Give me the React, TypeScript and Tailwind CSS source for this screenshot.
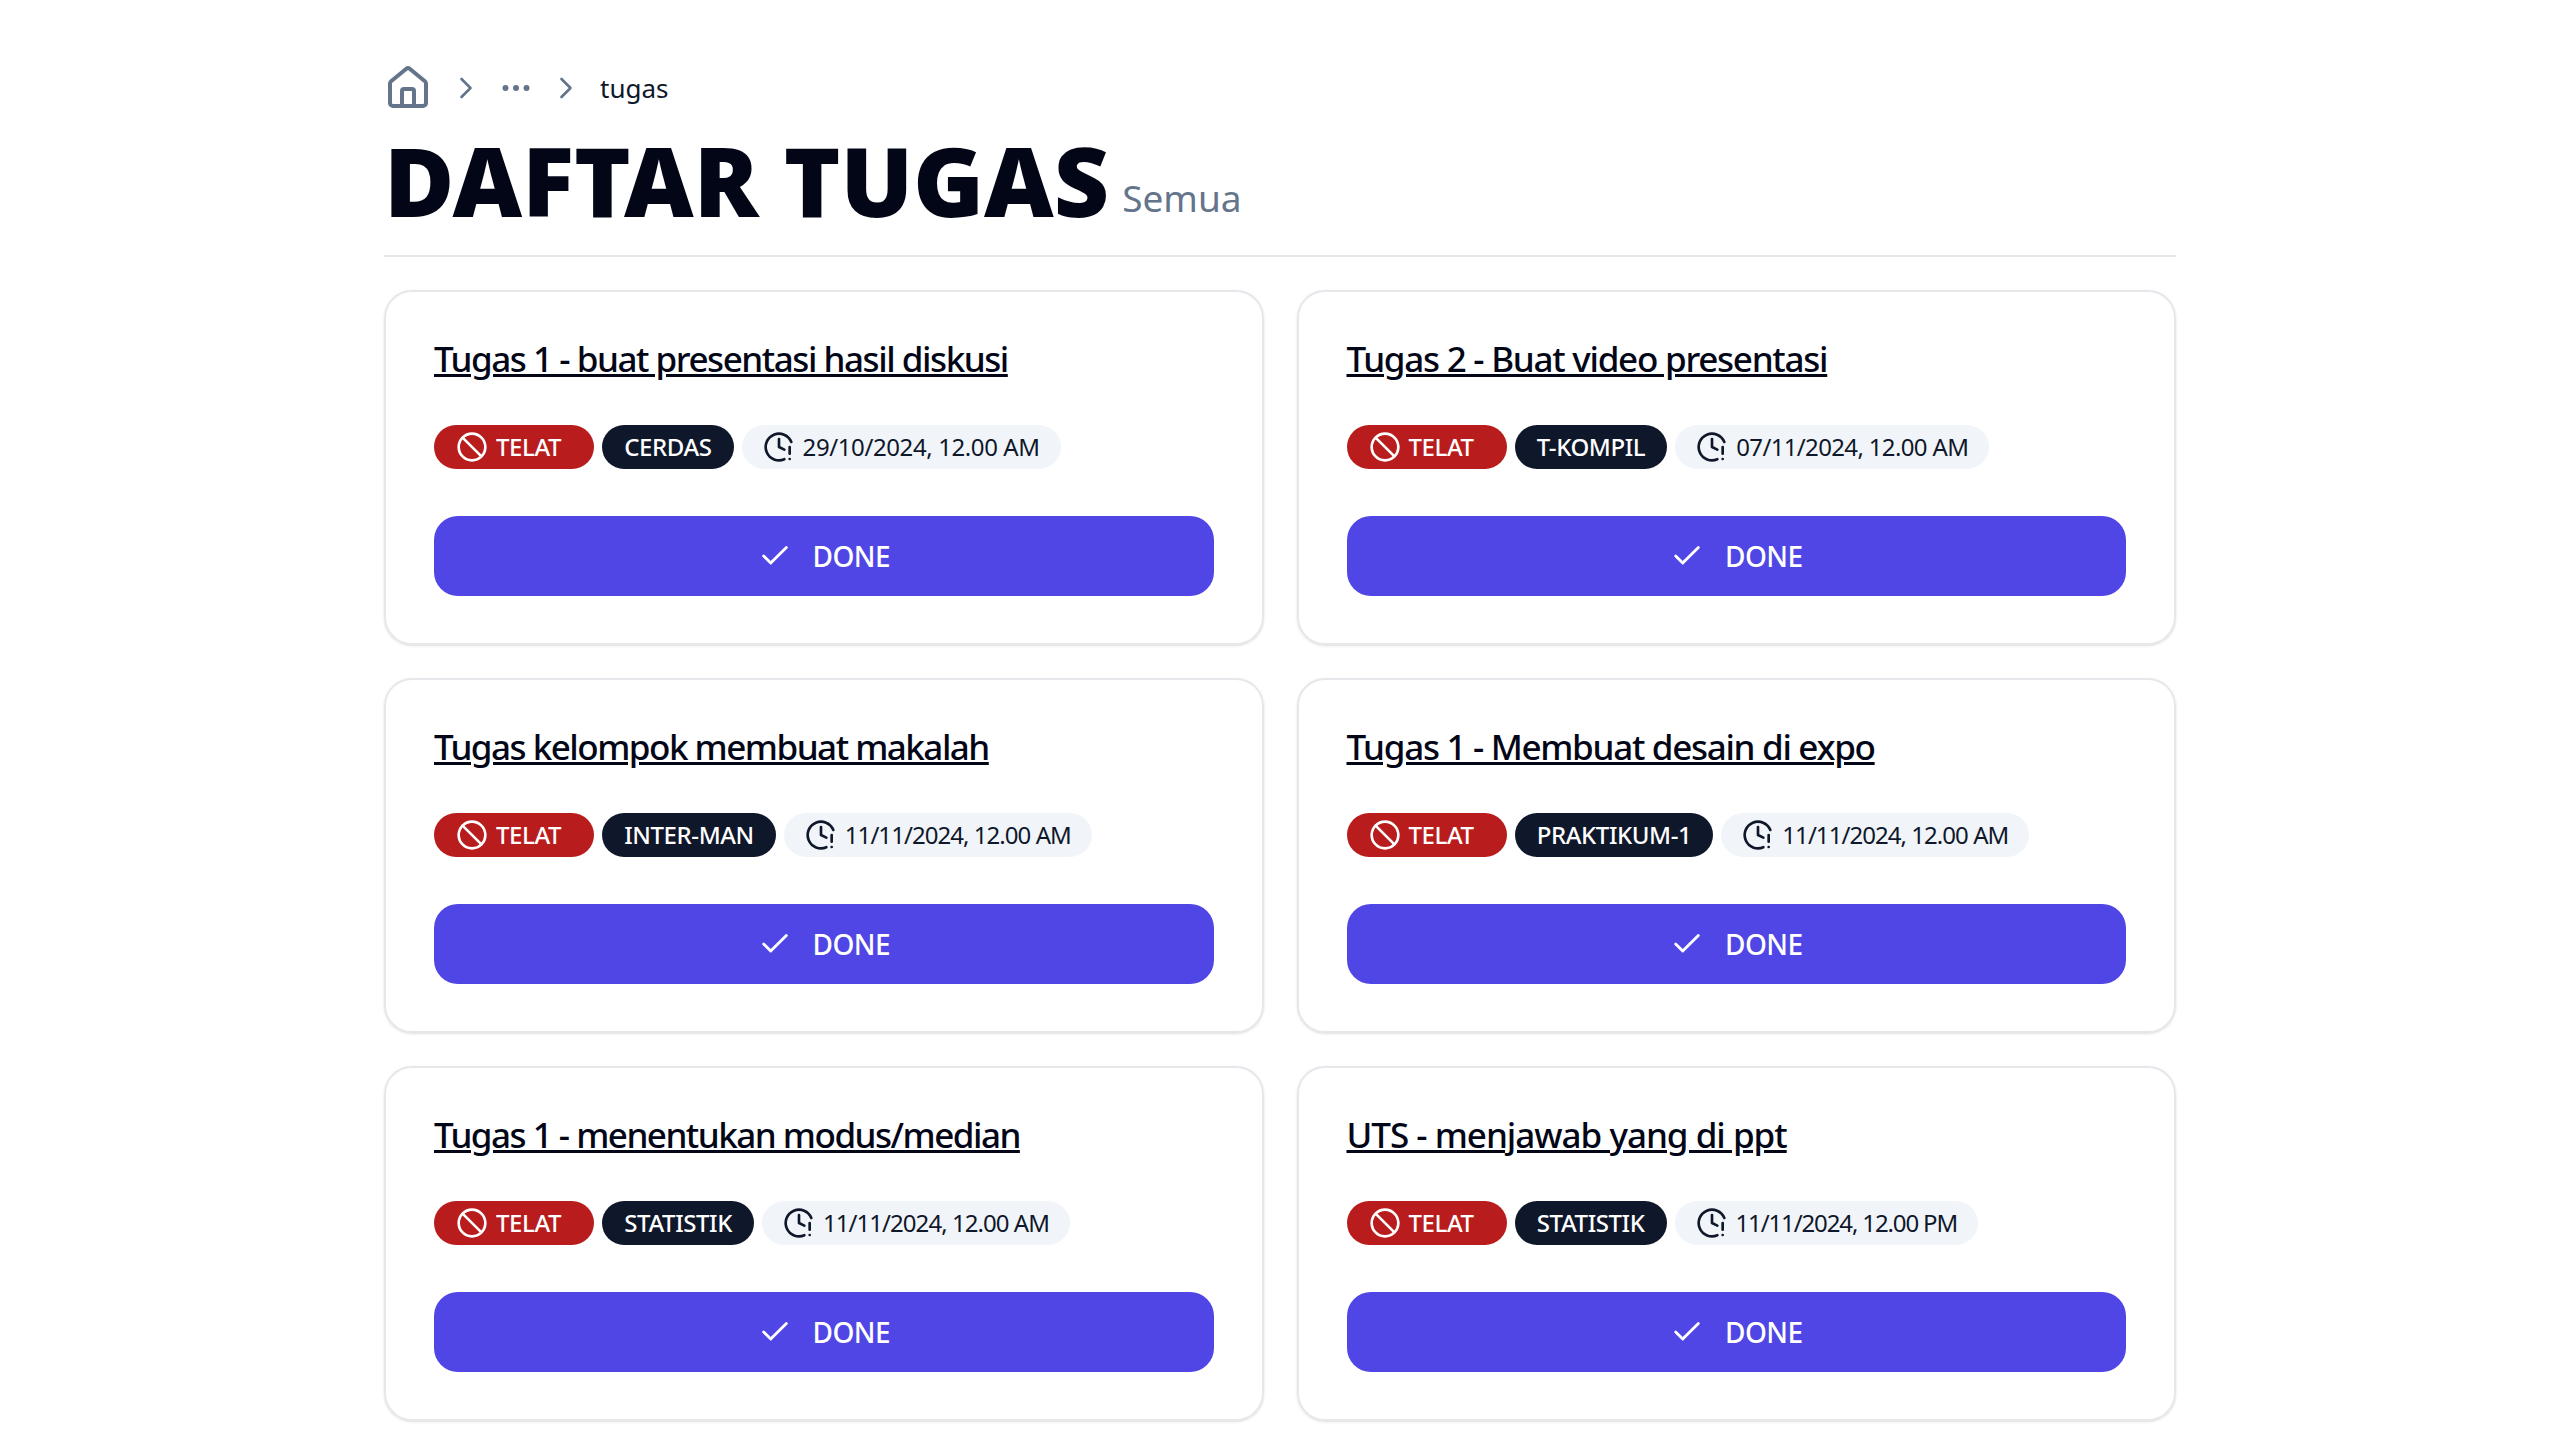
import { Ban, Check, ClockAlert, ChevronRight, Ellipsis } from "lucide-react";

const tasks = [
  { title: "Tugas 1 - buat presentasi hasil diskusi", titleSpacing: "tracking-[-1.45px]", course: "CERDAS", date: "29/10/2024, 12.00 AM", dateSpacing: "tracking-[-0.4px]" },
  { title: "Tugas 2 - Buat video presentasi", titleSpacing: "tracking-[-1.25px]", course: "T-KOMPIL", date: "07/11/2024, 12.00 AM", dateSpacing: "tracking-[-0.65px]" },
  { title: "Tugas kelompok membuat makalah", titleSpacing: "tracking-[-1.5px]", course: "INTER-MAN", date: "11/11/2024, 12.00 AM", dateSpacing: "tracking-[-0.95px]" },
  { title: "Tugas 1 - Membuat desain di expo", titleSpacing: "tracking-[-1.3px]", course: "PRAKTIKUM-1", date: "11/11/2024, 12.00 AM", dateSpacing: "tracking-[-0.95px]" },
  { title: "Tugas 1 - menentukan modus/median", titleSpacing: "tracking-[-1.5px]", course: "STATISTIK", date: "11/11/2024, 12.00 AM", dateSpacing: "tracking-[-0.95px]" },
  { title: "UTS - menjawab yang di ppt", titleSpacing: "tracking-[-1px]", course: "STATISTIK", date: "11/11/2024, 12.00 PM", dateSpacing: "tracking-[-1.13px]" },
];

const HomeIcon = () => (
  <svg viewBox="0 0 44 46" fill="none" stroke="#64748b" strokeWidth={4} strokeLinecap="round" strokeLinejoin="round" className="w-[44px] h-[46px] ml-[2px] -mt-[2px] shrink-0">
    <path d="M4 19.5a3 3 0 0 1 1.1-2.3L20 5a3 3 0 0 1 4 0l14.9 12.2a3 3 0 0 1 1.1 2.3V39a3 3 0 0 1-3 3H7a3 3 0 0 1-3-3z" />
    <path d="M16 42V27a2 2 0 0 1 2-2h8a2 2 0 0 1 2 2v15" />
  </svg>
);

const App = () => {
  return (
    <div className="min-h-screen bg-white font-['Noto_Sans','Open_Sans',sans-serif] text-[#0f172a]">
      <div className="w-[1792px] mx-auto pt-[60px]">
        <div className="flex items-center h-[56px] text-[#64748b]">
          <HomeIcon />
          <ChevronRight className="w-9 h-9 ml-[18px]" strokeWidth={1.75} />
          <Ellipsis className="w-9 h-9 ml-[14px]" strokeWidth={2} />
          <ChevronRight className="w-9 h-9 ml-[14px]" strokeWidth={1.75} />
          <span className="ml-[16px] text-[26px] text-[#0f172a]">tugas</span>
        </div>
        <div className="flex items-end gap-[13px] h-[141px] border-b-2 border-[#e5e7eb]">
          <h1 className="text-[96px] leading-[130px] mb-[10px] font-black text-[#020617]">DAFTAR TUGAS</h1>
          <span className="text-[37px] leading-[50px] mb-[32px] text-[#64748b]">Semua</span>
        </div>
        <div className="grid grid-cols-2 gap-x-[33px] gap-y-[33px] mt-[33px]">
          {tasks.map((task, index) => (
            <div key={index} className="h-[355px] rounded-[28px] border-2 border-[#e5e7eb] shadow-sm px-[48px] pt-[43px]">
              <h2 className={`text-[35px] leading-[48px] font-medium underline text-[#020617] ${task.titleSpacing}`}>{task.title}</h2>
              <div className="flex items-center gap-2 mt-[42px] text-[24px]">
                <span className="flex items-center h-[44px] pl-[22px] pr-[33px] gap-[8px] rounded-full bg-[#b91c1c] text-white font-medium tracking-[-0.4px]">
                  <Ban className="w-8 h-8 shrink-0" strokeWidth={2} />
                  TELAT
                </span>
                <span className="flex items-center h-[44px] px-[22px] rounded-full bg-[#0f172a] text-white font-medium tracking-[-0.4px]">
                  {task.course}
                </span>
                <span className={`flex items-center h-[44px] px-[21px] gap-[8px] rounded-full bg-[#f1f5f9] ${task.dateSpacing}`}>
                  <ClockAlert className="w-8 h-8 shrink-0" strokeWidth={2} />
                  {task.date}
                </span>
              </div>
              <button className="flex items-center justify-center gap-[21px] w-full h-[80px] mt-[47px] rounded-[24px] bg-[#4f46e5] text-white text-[28px] font-medium tracking-[-0.6px]">
                <Check className="w-[34px] h-[34px]" strokeWidth={2} />
                DONE
              </button>
            </div>
          ))}
        </div>
      </div>
    </div>
  );
};

export default App;
